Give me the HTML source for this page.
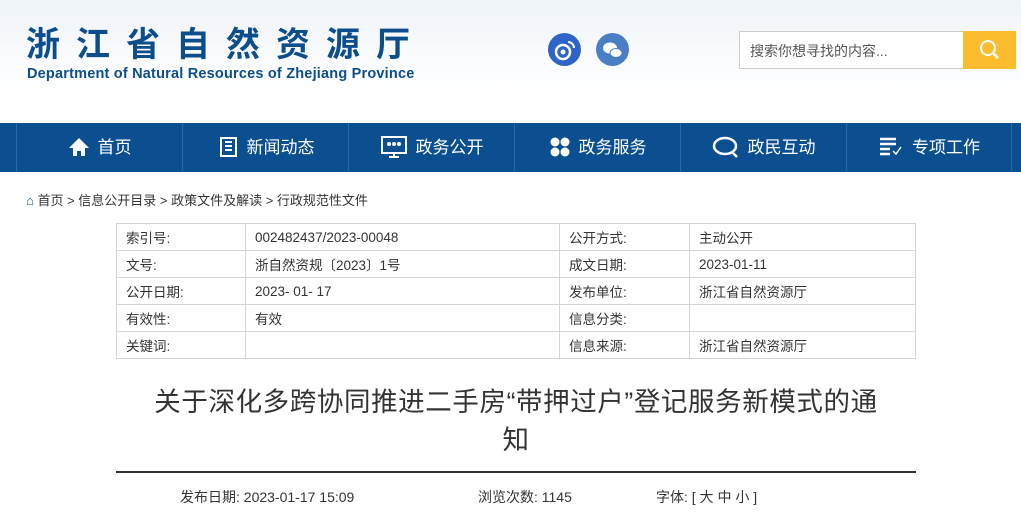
<!DOCTYPE html>
<html><head><meta charset="utf-8"><style>
*{margin:0;padding:0;box-sizing:border-box}
body{width:1021px;height:512px;overflow:hidden;background:#fff;font-family:"Liberation Sans","Noto Sans CJK SC",sans-serif;position:relative}
.hdr{position:absolute;left:0;top:0;width:1021px;height:123px;background:linear-gradient(180deg,#eef3f8 0%,#f8fafc 40%,#fff 80%)}
.t1{position:absolute;left:26px;top:19px;font-size:34px;line-height:46px;font-weight:bold;color:#0c4d8c;letter-spacing:16px;font-family:"Noto Sans CJK SC",sans-serif}
.t2{position:absolute;left:27px;top:66px;font-size:14.5px;font-weight:bold;color:#0c4d8c;letter-spacing:0.2px;white-space:nowrap}
.ic{position:absolute;top:33px;width:33px;height:33px;border-radius:50%}
.srch{position:absolute;left:739px;top:31px;width:225px;height:38px;border:1px solid #ccc;background:#fff;font-size:14px;color:#555;padding:9px 10px}
.sb{position:absolute;left:963px;top:31px;width:53px;height:38px;background:#fbbd2e}
.nav{position:absolute;left:0;top:123px;width:1021px;height:49px;background:#0b4f91}
.nav div{position:absolute;top:0;height:49px;width:166px;border-left:1px solid #2d6aa5;color:#fff;font-size:17px;line-height:49px;text-align:center}
.nav svg{vertical-align:middle;margin-right:8px;margin-top:-4px}
.bc{position:absolute;left:26px;top:190px;font-size:13px;color:#333}
table{position:absolute;left:116px;top:223px;width:800px;border-collapse:collapse;font-size:13.5px;color:#333}
td{border:1px solid #d4d4d4;height:27px;padding:0 9px}
h1{position:absolute;left:136px;top:383px;width:760px;text-align:center;font-weight:normal;font-size:26.5px;letter-spacing:0.6px;line-height:38px;color:#333}
.hr{position:absolute;left:116px;top:471px;width:800px;height:2px;background:#333}
.meta{position:absolute;top:487px;font-size:14px;color:#333}
</style></head><body>
<div class="hdr"></div>
<div class="t1">浙江省自然资源厅</div>
<div class="t2">Department of Natural Resources of Zhejiang Province</div>
<div class="ic" style="left:548px;background:#2e63c9"><svg width="33" height="33"><circle cx="15" cy="19" r="7" fill="none" stroke="#fff" stroke-width="2.5"/><circle cx="15" cy="19" r="2.5" fill="#fff"/><path d="M20 9a6 6 0 0 1 6 6" stroke="#fff" stroke-width="2" fill="none"/></svg></div>
<div class="ic" style="left:596px;background:#4a7fc6"><svg width="33" height="33"><ellipse cx="14" cy="15" rx="7" ry="5.5" fill="#fff"/><ellipse cx="20" cy="20" rx="6" ry="4.5" fill="#fff" stroke="#4a7fc6"/></svg></div>
<div class="srch">搜索你想寻找的内容...</div>
<div class="sb"><svg width="53" height="38"><circle cx="25" cy="17" r="7" fill="none" stroke="#fff" stroke-width="2"/><path d="M30 22l5 5" stroke="#fff" stroke-width="2.5"/></svg></div>
<div class="nav">
<div style="left:16px"><svg width="22" height="20"><path d="M11 1L1 11h4v8h4v-5h4v5h4v-8h4z" fill="#fff"/></svg>首页</div>
<div style="left:182px"><svg width="22" height="22"><rect x="4" y="2" width="15" height="18" fill="none" stroke="#fff" stroke-width="2"/><path d="M8 6h7M8 10h7M8 14h7" stroke="#fff" stroke-width="2"/></svg>新闻动态</div>
<div style="left:348px"><svg width="28" height="24"><rect x="2" y="2" width="24" height="16" fill="none" stroke="#fff" stroke-width="2"/><path d="M14 18v4M9 22h10" stroke="#fff" stroke-width="2"/><circle cx="9" cy="9" r="2" fill="#fff"/><circle cx="14" cy="9" r="2" fill="#fff"/><circle cx="19" cy="9" r="2" fill="#fff"/></svg>政务公开</div>
<div style="left:514px"><svg width="22" height="22"><circle cx="6" cy="6" r="4.5" fill="#fff"/><circle cx="16" cy="6" r="4.5" fill="#fff"/><circle cx="6" cy="16" r="4.5" fill="#fff"/><circle cx="16" cy="16" r="4.5" fill="#fff"/></svg>政务服务</div>
<div style="left:680px"><svg width="28" height="24"><ellipse cx="13" cy="11" rx="11" ry="8" fill="none" stroke="#fff" stroke-width="2.5"/><path d="M20 17l5 5" stroke="#fff" stroke-width="2.5"/></svg>政民互动</div>
<div style="left:846px;border-right:1px solid #2d6aa5"><svg width="26" height="22"><path d="M2 3h16M2 8h16M2 13h10M2 18h10" stroke="#fff" stroke-width="2.5"/><path d="M15 15l3 3 5-7" stroke="#fff" stroke-width="1.5" fill="none"/></svg>专项工作</div>
</div>
<div class="bc"><span style="color:#0b4f91">⌂</span> 首页 &gt; 信息公开目录 &gt; 政策文件及解读 &gt; 行政规范性文件</div>
<table>
<tr><td style="width:129px">索引号:</td><td style="width:314px">002482437/2023-00048</td><td style="width:130px">公开方式:</td><td>主动公开</td></tr>
<tr><td>文号:</td><td>浙自然资规〔2023〕1号</td><td>成文日期:</td><td>2023-01-11</td></tr>
<tr><td>公开日期:</td><td>2023- 01- 17</td><td>发布单位:</td><td>浙江省自然资源厅</td></tr>
<tr><td>有效性:</td><td>有效</td><td>信息分类:</td><td></td></tr>
<tr><td>关键词:</td><td></td><td>信息来源:</td><td>浙江省自然资源厅</td></tr>
</table>
<h1>关于深化多跨协同推进二手房“带押过户”登记服务新模式的通<br>知</h1>
<div class="hr"></div>
<div class="meta" style="left:180px">发布日期: 2023-01-17 15:09</div>
<div class="meta" style="left:478px">浏览次数: 1145</div>
<div class="meta" style="left:656px">字体: [ 大 中 小 ]</div>
</body></html>
